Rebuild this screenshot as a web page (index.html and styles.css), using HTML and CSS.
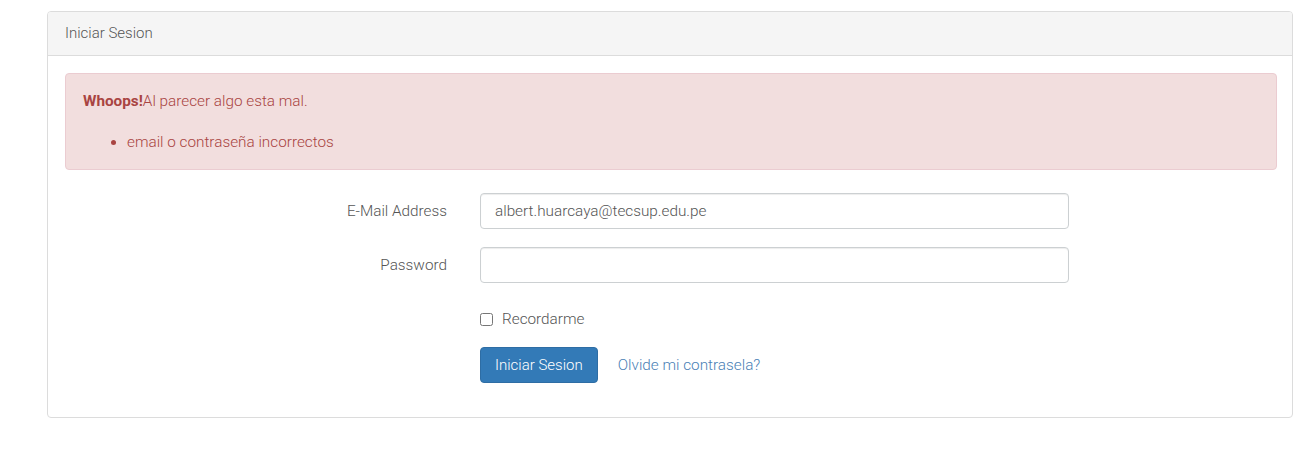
FILE: index.html
```html
<!DOCTYPE html>
<html lang="es">
<head>
<meta charset="utf-8">
<title>Iniciar Sesion</title>
<link rel="stylesheet" href="styles.css">
</head>
<body>
<div class="page">
  <div class="panel">
    <div class="panel-heading">Iniciar Sesion</div>
    <div class="panel-body">
      <div class="alert">
        <div class="alert-title"><strong>Whoops!</strong>Al parecer algo esta mal.</div>
        <ul class="alert-list">
          <li>email o contraseña incorrectos</li>
        </ul>
      </div>
      <form class="form">
        <div class="form-row">
          <label class="form-label" for="email">E-Mail Address</label>
          <input class="form-control" id="email" type="email" value="albert.huarcaya@tecsup.edu.pe">
        </div>
        <div class="form-row">
          <label class="form-label" for="password">Password</label>
          <input class="form-control" id="password" type="password">
        </div>
        <div class="form-row check-row">
          <span></span>
          <label class="checkbox"><input type="checkbox"><span>Recordarme</span></label>
        </div>
        <div class="form-row action-row">
          <span></span>
          <div class="actions">
            <button type="button" class="btn">Iniciar Sesion</button>
            <a class="link" href="#">Olvide mi contrasela?</a>
          </div>
        </div>
      </form>
    </div>
  </div>
</div>
</body>
</html>
```
FILE: styles.css
```css
* { box-sizing: border-box; }
html, body {
  margin: 0;
  background: #fff;
  font-family: Roboto, "Liberation Sans", Arial, sans-serif;
  font-size: 15.3px;
  font-weight: 300;
  color: #636b6f;
}
.page {
  padding: 11px 19px 0 47px;
}
.panel {
  border: 1px solid #dcdcdc;
  border-radius: 4px;
  background: #fff;
}
.panel-heading {
  background: #f5f5f5;
  border-bottom: 1px solid #dcdcdc;
  border-radius: 3px 3px 0 0;
  padding: 11px 17px;
  line-height: 21px;
  color: #555;
  font-weight: 300;
  font-size: 15px;
}
.panel-body {
  padding: 17px 15px 34px 17px;
}
.alert {
  background: #f2dede;
  border: 1px solid #ebccd1;
  border-radius: 4px;
  color: #a94442;
  padding: 15px 17px;
  line-height: 24px;
}
.alert-title strong {
  font-weight: 700;
}
.alert-list {
  margin: 17px 0 0;
  padding-left: 44px;
}
.form {
  margin-top: 23px;
}
.form-row {
  display: grid;
  grid-template-columns: 382px 589px;
  column-gap: 33px;
  align-items: center;
  margin-bottom: 18px;
}
.form-label {
  text-align: right;
  color: #555;
}
.form-control {
  height: 36px;
  width: 100%;
  border: 1px solid #ccd0d2;
  border-radius: 4px;
  padding: 6px 14px;
  font-family: inherit;
  font-size: 15.3px;
  font-weight: 300;
  color: #555;
  box-shadow: inset 0 1px 1px rgba(0,0,0,0.075);
  outline: none;
}
.check-row {
  height: 36px;
  margin-bottom: 10px;
}
.checkbox {
  display: flex;
  align-items: center;
  gap: 9px;
  color: #555;
}
.checkbox input {
  margin: 0;
  width: 13px;
  height: 13px;
}
.action-row {
  margin-bottom: 0;
}
.actions {
  display: flex;
  align-items: center;
  gap: 20px;
}
.btn {
  height: 36px;
  padding: 6px 14px;
  background: #337ab7;
  border: 1px solid #2e6da4;
  border-radius: 4px;
  color: #fff;
  font-family: inherit;
  font-size: 15px;
  font-weight: 300;
}
.link {
  color: #4a7fb5;
  text-decoration: none;
}
```
